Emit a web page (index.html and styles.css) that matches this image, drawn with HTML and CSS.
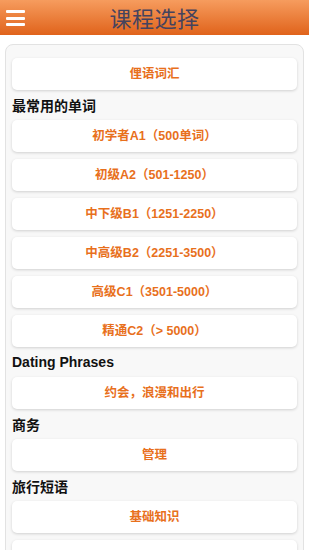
FILE: index.html
```html
<!DOCTYPE html>
<html lang="zh">
<head>
<meta charset="utf-8">
<meta name="viewport" content="width=device-width, initial-scale=1">
<title>课程选择</title>
<link rel="stylesheet" href="styles.css">
</head>
<body>
<div class="page">
<header class="topbar">
  <button class="menu" aria-label="menu">
    <span></span><span></span><span></span>
  </button>
  <h1 class="title">课程选择</h1>
</header>
<main class="panel">
  <a class="item">俚语词汇</a>
  <h2 class="section">最常用的单词</h2>
  <a class="item">初学者A1（500单词）</a>
  <a class="item">初级A2（501-1250）</a>
  <a class="item">中下级B1（1251-2250）</a>
  <a class="item">中高级B2（2251-3500）</a>
  <a class="item">高级C1（3501-5000）</a>
  <a class="item">精通C2（&gt; 5000）</a>
  <h2 class="section latin">Dating Phrases</h2>
  <a class="item">约会，浪漫和出行</a>
  <h2 class="section">商务</h2>
  <a class="item">管理</a>
  <h2 class="section">旅行短语</h2>
  <a class="item">基础知识</a>
  <div class="item"></div>
</main>
</div>
</body>
</html>
```

FILE: styles.css
```css
html, body {
  margin: 0;
  padding: 0;
  background: #ffffff;
}
body {
  font-family: "Liberation Sans", "Noto Sans CJK SC", sans-serif;
  overflow: hidden;
  height: 550px;
}
.page {
  width: 309px;
}
.topbar {
  position: relative;
  height: 35px;
  background: linear-gradient(#f69c5e, #e0631b);
  display: flex;
  align-items: center;
  justify-content: center;
}
.menu {
  position: absolute;
  left: 6px;
  top: 10px;
  width: 19px;
  height: 16px;
  padding: 0;
  border: 0;
  background: none;
  display: flex;
  flex-direction: column;
  justify-content: space-between;
}
.menu span {
  display: block;
  height: 3px;
  width: 19px;
  background: #ffffff;
  border-radius: 1px;
}
.title {
  margin: 0;
  font-family: "Noto Sans CJK SC", sans-serif;
  font-weight: 400;
  font-size: 22px;
  line-height: 35px;
  color: #45435e;
  letter-spacing: 0.5px;
}
.panel {
  margin: 9px 5px 0;
  border: 1px solid #e2e2e2;
  border-radius: 8px;
  background: #f8f8f8;
  padding: 13px 6px 20px;
  display: flex;
  flex-direction: column;
}
.item {
  display: block;
  height: 32px;
  line-height: 32px;
  background: #ffffff;
  border-radius: 5px;
  box-shadow: 0 1px 3px rgba(0, 0, 0, 0.16);
  text-align: center;
  font-size: 12.5px;
  font-weight: 700;
  color: #e8701c;
  text-decoration: none;
}
.item + .item {
  margin-top: 7px;
}
.section {
  margin: 0;
  height: 30px;
  line-height: 30px;
  font-size: 14px;
  font-weight: 700;
  color: #111111;
  font-family: "Noto Sans CJK SC", sans-serif;
}
.section.latin {
  font-family: "Liberation Sans", sans-serif;
}
```
